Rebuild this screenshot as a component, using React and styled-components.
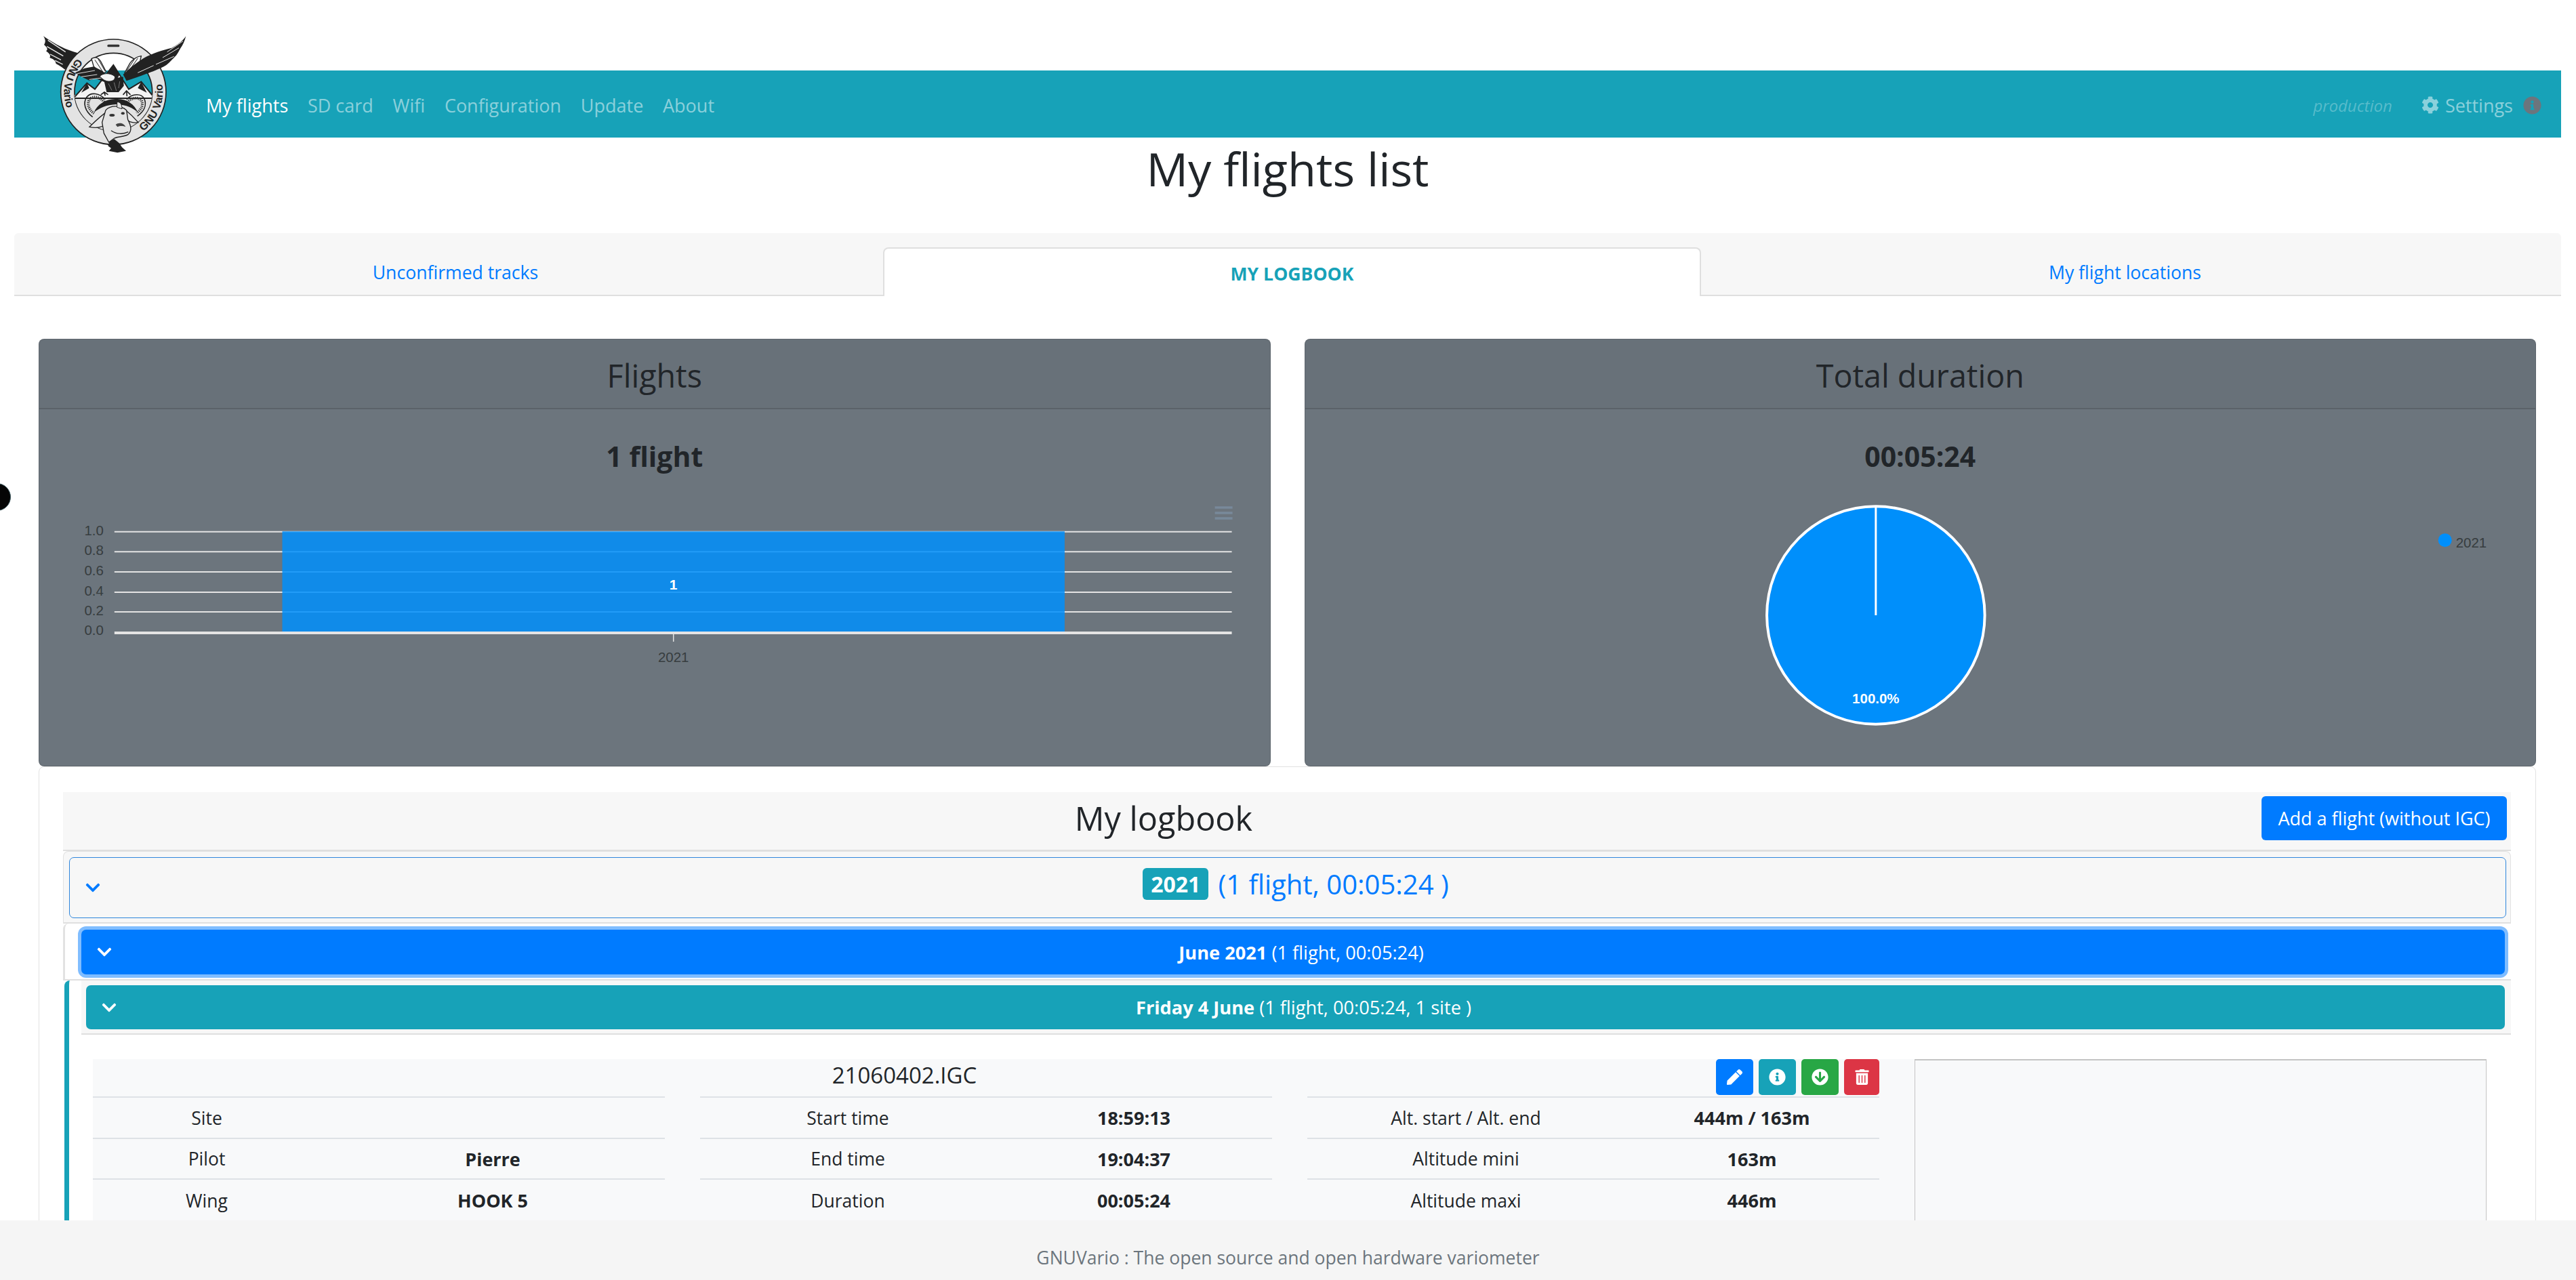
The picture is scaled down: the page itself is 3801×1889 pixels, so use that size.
import React from 'react';
import styled, { createGlobalStyle } from 'styled-components';
import { FaCog, FaInfoCircle, FaChevronDown, FaPen, FaArrowCircleDown, FaTrashAlt } from 'react-icons/fa';

const GlobalStyle = createGlobalStyle`
  html, body {
    margin: 0;
    padding: 0;
    background: #fff;
    color: #212529;
    font-family: "Open Sans", "Noto Sans", "Liberation Sans", sans-serif;
    font-size: 27px;
  }
  * { box-sizing: border-box; }
`;

const Page = styled.div`
  height: 1889px;
  overflow: hidden;
  padding: 104px 22px 0 21px;
`;

const NavBar = styled.nav`
  position: relative;
  display: flex;
  align-items: center;
  height: 99px;
  padding: 3px 29px 0 283px;
  background: #17a2b8;
`;

const LogoBox = styled.div`
  position: absolute;
  left: 19px;
  top: -74px;
  width: 260px;
  height: 210px;
`;

const NavLinks = styled.div`
  display: flex;
  flex: 1;
  gap: 28.7px;
`;

const NavLink = styled.a`
  color: ${(p) => (p.$active ? '#fff' : 'rgba(255,255,255,.5)')};
`;

const NavRight = styled.div`
  display: flex;
  align-items: center;
`;

const EnvLabel = styled.em`
  margin-right: 43px;
  color: rgba(255,255,255,.28);
  font-size: 24px;
`;

const SettingsLink = styled.a`
  display: flex;
  align-items: center;
  gap: 9px;
  margin-right: 15px;
  color: rgba(255,255,255,.5);
`;

const InfoDot = styled.span`
  display: flex;
  color: #6c757d;
`;

const PageTitle = styled.h1`
  margin: 0 0 47px;
  padding-bottom: 3px;
  font-size: 68.5px;
  font-weight: 400;
  line-height: 91px;
  text-align: center;
`;

const Tabs = styled.div`
  display: grid;
  grid-template-columns: 1282px 1207px 1fr;
  align-items: end;
  height: 93px;
  border-bottom: 2px solid #dfdfdf;
  border-radius: 6px 6px 0 0;
  background: #f7f7f7;
  font-size: 26.6px;
`;

const Tab = styled.a`
  display: flex;
  align-items: center;
  justify-content: center;
  height: 72px;
  margin-bottom: ${(p) => (p.$active ? '-2px' : '0')};
  padding: ${(p) => p.$pad || '0'};
  padding-top: ${(p) => (p.$active ? '3px' : '6px')};
  border: ${(p) => (p.$active ? '2px solid #dfdfdf' : 'none')};
  border-bottom: none;
  border-radius: 8px 8px 0 0;
  background: ${(p) => (p.$active ? '#fff' : 'transparent')};
  color: ${(p) => (p.$active ? '#17a2b8' : '#007bff')};
  font-weight: ${(p) => (p.$active ? 700 : 400)};
  text-transform: ${(p) => (p.$active ? 'uppercase' : 'none')};
`;

const Content = styled.div`
  padding: 63px 37px 0 36px;
`;

const CardRow = styled.div`
  display: grid;
  grid-template-columns: 1fr 1fr;
  gap: 50px;
`;

const StatCard = styled.section`
  height: 631px;
  overflow: hidden;
  border: 1px solid rgba(0,0,0,.125);
  border-radius: 8px;
  background: #6c757d;
`;

const StatHeader = styled.h3`
  height: 103px;
  margin: 0;
  border-bottom: 2px solid rgba(0,0,0,.125);
  background: rgba(0,0,0,.03);
  font-size: 46.6px;
  font-weight: 400;
  line-height: 106px;
  text-align: center;
`;

const StatValue = styled.h4`
  height: 117px;
  margin: 0;
  font-size: 41px;
  font-weight: 700;
  line-height: 138px;
  text-align: center;
`;

const ChartSvg = styled.svg`
  display: block;
  width: 100%;
  height: 408px;
`;

const LogCard = styled.section`
  padding: 37px 36px 0 35px;
  border: 1px solid #e2e2e2;
  border-radius: 8px;
`;

const LogHeader = styled.header`
  display: flex;
  align-items: center;
  height: 87px;
  padding-right: 6px;
  border-bottom: 2px solid #dfdfdf;
  background: #f7f7f7;
`;

const LogTitle = styled.h3`
  flex: 1;
  margin: 0 0 9px 4px;
  font-size: 48.6px;
  font-weight: 400;
  text-align: center;
`;

const AddButton = styled.button`
  width: 362px;
  height: 65px;
  margin-bottom: 8px;
  padding: 0;
  border: none;
  border-radius: 6px;
  background: #007bff;
  color: #fff;
  font: inherit;
`;

const YearRow = styled.div`
  padding: 8px 6px 6px 8px;
  border: 1px solid #e2e2e2;
  border-bottom: 2px solid #dfdfdf;
  border-radius: 8px 8px 0 0;
  background: #f7f7f7;
`;

const Toggle = styled.div`
  display: flex;
  align-items: center;
  height: ${(p) => p.$height};
  padding: 0 22px;
  border-radius: 7px;
  border: ${(p) => (p.$variant === 'outline' ? '1.5px solid #2f86dc' : 'none')};
  background: ${(p) => ({ outline: 'transparent', primary: '#007bff', info: '#17a2b8' }[p.$variant])};
  box-shadow: ${(p) => (p.$variant === 'primary' ? '0 0 0 5px #80bdff' : 'none')};
  color: ${(p) => (p.$variant === 'outline' ? '#007bff' : '#fff')};
`;

const ToggleText = styled.div`
  flex: 1;
  padding-bottom: ${(p) => p.$lift || '0'};
  text-align: center;
  font-size: ${(p) => p.$size || '27.2px'};
`;

const YearBadge = styled.span`
  display: inline-block;
  margin-right: 14px;
  padding: 0 12px;
  border-radius: 6px;
  background: #17a2b8;
  color: #fff;
  font-size: 32px;
  font-weight: 700;
  line-height: 47px;
  vertical-align: 3px;
`;

const MonthRow = styled.div`
  padding: 9px 9px 7px 24px;
  border-left: 3px solid #e2e2e2;
  border-bottom: 2px solid #dfdfdf;
  border-radius: 8px 0 0 0;
`;

const DayBlock = styled.div`
  margin-left: 2px;
  border-left: 7px solid #17a2b8;
  border-radius: 8px 0 0 0;
`;

const DayHeader = styled.div`
  margin-left: 18px;
  padding: 7px 9px 6px 7px;
  border-bottom: 2px solid #dfdfdf;
  background: #f7f7f7;
`;

const DayBody = styled.div`
  display: grid;
  grid-template-columns: repeat(4, 1fr);
  grid-template-rows: 55px 1fr;
  column-gap: 52px;
  margin: 36px 36px 0 35px;
  background: #f8f9fa;
`;

const FlightHead = styled.div`
  grid-column: 1 / 4;
  display: flex;
  align-items: flex-start;
`;

const FlightName = styled.div`
  flex: 1;
  font-size: 33px;
  line-height: 47px;
  text-align: center;
`;

const ActionButtons = styled.div`
  display: flex;
  gap: 8px;
`;

const InfoColumn = styled.div`
  border-top: 2px solid #dee2e6;
  font-size: 26.5px;
`;

const InfoRow = styled.div`
  display: grid;
  grid-template-columns: ${(p) => p.$labelWidth}px 1fr;
  align-items: center;
  height: 60.5px;
  padding-top: 1px;
  border-bottom: 2px solid #dee2e6;
  text-align: center;

  &:last-child {
    border-bottom: none;
  }
`;

const InfoValue = styled.b`
  font-size: 27px;
  font-weight: 700;
`;

const IconButton = styled.button`
  display: flex;
  align-items: center;
  justify-content: center;
  width: ${(p) => p.$width || '55px'};
  height: 53px;
  padding: 0;
  border: none;
  border-radius: 5px;
  background: ${(p) => p.$color};
  color: #fff;
`;

const MapBox = styled.div`
  grid-column: 4;
  grid-row: 1 / span 2;
  height: 400px;
  border: 1px solid #c4c4c4;
  border-top-width: 2px;
`;

const Footer = styled.footer`
  position: fixed;
  left: 0;
  right: 0;
  bottom: 0;
  height: 88px;
  background: #f5f5f5;
  color: #6c757d;
  font-size: 26.5px;
  line-height: 110px;
  text-align: center;
`;

const EdgeDot = styled.div`
  position: fixed;
  left: -25px;
  top: 713px;
  width: 41px;
  height: 41px;
  border: 1px solid #3d5a60;
  border-radius: 50%;
  background: #050505;
`;

const axisText = { fontFamily: '"Liberation Sans", Arial, sans-serif', fontSize: 20.5, fill: '#373d3f' };

const BarChart = () => {
  const ticks = [['1.0', 63.5], ['0.8', 93], ['0.6', 123], ['0.4', 153], ['0.2', 182]];
  return (
    <ChartSvg viewBox="0 0 1818 408">
      <g fill="#78899a">
        <rect x="1737" y="26" width="26" height="3.5" />
        <rect x="1737" y="34" width="26" height="3.5" />
        <rect x="1737" y="42" width="26" height="3.5" />
      </g>
      {ticks.map(([label, y]) => (
        <g key={label}>
          <line x1="111" x2="1762" y1={y} y2={y} stroke="#e4e4e4" strokeWidth="2" />
          <text x="95" y={y + 5} textAnchor="end" style={axisText}>{label}</text>
        </g>
      ))}
      <text x="95" y="216" textAnchor="end" style={axisText}>0.0</text>
      <rect x="359" y="63" width="1156" height="150" fill="#008ffb" fillOpacity=".85" />
      <line x1="111" x2="1762" y1="213" y2="213" stroke="#e4e4e4" strokeWidth="4" />
      <line x1="937" x2="937" y1="214" y2="226" stroke="#e4e4e4" strokeWidth="1.5" />
      <text x="937" y="256" textAnchor="middle" style={axisText}>2021</text>
      <text x="937" y="149" textAnchor="middle" fill="#fff" fontWeight="700" fontSize="21" fontFamily='"Liberation Sans", Arial, sans-serif'>1</text>
    </ChartSvg>
  );
};

const PieChart = () => (
  <ChartSvg viewBox="0 0 1818 408">
    <circle cx="843" cy="187" r="161" fill="#008ffb" stroke="#fff" strokeWidth="4" />
    <line x1="843" x2="843" y1="26" y2="187" stroke="#fff" strokeWidth="3" />
    <text x="843" y="317" textAnchor="middle" fill="#fff" fontWeight="700" fontSize="20.5" fontFamily='"Liberation Sans", Arial, sans-serif'>100.0%</text>
    <circle cx="1684" cy="76" r="10" fill="#008ffb" />
    <text x="1700" y="87" style={axisText}>2021</text>
  </ChartSvg>
);

const Logo = () => (
  <svg viewBox="0 0 780 630" width="260" height="210">
    <defs>
      <clipPath id="hole"><circle cx="382" cy="317" r="172" /></clipPath>
      <path id="arcLeft" d="M232 158 A218 218 0 0 0 250 490" />
      <path id="arcRight" d="M505 497 A218 218 0 0 0 590 250" />
    </defs>
    {/* outer left wing, under the ring */}
    <path d="M225 145 C170 130 130 110 72 70 C85 90 80 100 75 108 C92 122 92 130 84 136 C104 150 104 158 100 166 C124 174 126 184 128 192 C145 200 158 212 168 218 Z" fill="#222" />
    <path d="M92 88 L170 140 M88 116 L160 158 M102 150 L150 175 M124 178 L158 195" stroke="#eee" strokeWidth="4" fill="none" />
    {/* ring */}
    <path d="M382 84 A233 233 0 1 0 382 550 A233 233 0 1 0 382 84 Z M382 145 A172 172 0 1 1 382 489 A172 172 0 1 1 382 145 Z" fillRule="evenodd" fill="#e3e3e3" stroke="#222" strokeWidth="5" />
    <rect x="355" y="107" width="54" height="11" rx="5" fill="#333" />
    <text fontFamily='"Liberation Sans", Arial, sans-serif' fontWeight="700" fontSize="48" fill="#222">
      <textPath href="#arcLeft" startOffset="14">GNU Vario</textPath>
    </text>
    <text fontFamily='"Liberation Sans", Arial, sans-serif' fontWeight="700" fontSize="48" fill="#222">
      <textPath href="#arcRight" startOffset="10">GNU Vario</textPath>
    </text>
    {/* mountains and inner fill */}
    <g clipPath="url(#hole)">
      <rect x="200" y="330" width="370" height="170" fill="#e3e3e3" />
      <path d="M205 345 L265 278 L300 305 L382 198 L450 305 L505 272 L565 345 Z" fill="#f2f2f2" stroke="#222" strokeWidth="6" />
      <path d="M382 198 L345 250 L365 240 L395 265 L410 240 Z M265 278 L240 320 L275 300 Z M505 272 L530 320 L490 300 Z" fill="#222" />
    </g>
    {/* left wing on top */}
    <path d="M285 170 C300 160 315 165 325 180 L350 228 L330 238 L295 205 Z" fill="#f5f5f5" stroke="#222" strokeWidth="4" />
    <path d="M300 175 L335 228 M315 172 L345 225" stroke="#222" strokeWidth="3" />
    <path d="M212 232 L255 212 L295 205 L335 225 L355 245 L348 275 L305 258 L275 266 L240 250 Z" fill="#222" />
    <path d="M222 236 L300 222 M240 250 L310 240 M275 262 L330 255" stroke="#ddd" strokeWidth="3" />
    {/* right wing, over the ring */}
    <path d="M505 158 C490 160 470 170 455 190 L432 232 L455 240 L495 205 Z" fill="#f5f5f5" stroke="#222" strokeWidth="4" />
    <path d="M490 168 L448 228 M475 172 L440 225" stroke="#222" strokeWidth="3" />
    <path d="M703 70 C690 90 668 108 640 122 C600 132 555 145 515 168 C480 190 450 215 425 240 L440 268 C470 258 500 248 525 238 C555 228 585 215 605 205 C625 195 640 175 660 155 C668 145 672 135 678 125 C690 110 698 90 703 70 Z" fill="#222" />
    <path d="M690 92 L620 140 M672 122 L600 165 M650 160 L570 195 M560 200 L490 232" stroke="#e8e8e8" strokeWidth="3" fill="none" />
    {/* eagle body */}
    <path d="M340 265 L425 250 L428 290 L405 318 L352 318 Z" fill="#222" />
    <path d="M360 280 L375 310 M385 275 L395 312 M410 270 L405 300" stroke="#888" strokeWidth="2.5" />
    <path d="M322 248 C335 232 370 232 388 248 C392 262 378 272 358 270 C345 268 335 262 322 248 Z" fill="#f4f4f4" stroke="#222" strokeWidth="3" />
    <path d="M342 318 L328 328 M342 318 L345 332 M342 318 L357 328 M440 312 L426 328 M440 312 L442 334 M440 312 L456 328" stroke="#222" strokeWidth="5" strokeLinecap="round" />
    {/* horns: thin hatched loops and a solid arch between them */}
    <path d="M345 350 C322 322 282 316 264 340 C246 366 256 402 290 428" fill="none" stroke="#222" strokeWidth="5" />
    <path d="M440 350 C468 322 506 324 518 346 C532 376 516 404 488 424" fill="none" stroke="#222" strokeWidth="5" />
    <path d="M342 362 C322 338 290 332 276 350 C264 370 272 394 296 412" fill="none" stroke="#333" strokeWidth="12" strokeDasharray="4 4" />
    <path d="M442 362 C466 340 494 340 506 354 C516 376 506 396 484 410" fill="none" stroke="#333" strokeWidth="12" strokeDasharray="4 4" />
    <path d="M296 408 C310 372 350 346 395 348 C440 346 476 372 490 408 C470 388 440 374 395 372 C350 374 320 388 296 408 Z" fill="#222" />
    {/* ears and face */}
    <path d="M362 398 C330 420 300 448 276 472 C310 480 336 472 352 456 Z" fill="#e8e8e8" stroke="#222" strokeWidth="4" />
    <path d="M430 392 C455 412 475 432 492 452 C468 456 448 448 436 436 Z" fill="#e8e8e8" stroke="#222" strokeWidth="4" />
    <path d="M348 398 C368 375 415 375 440 398 L446 440 C462 470 464 490 446 506 C430 516 402 514 386 522 L362 540 L340 500 L332 452 Z" fill="#e3e3e3" stroke="#222" strokeWidth="4" />
    <path d="M398 362 C412 360 420 372 420 392 L398 385 Z" fill="#e3e3e3" stroke="#222" strokeWidth="3" />
    <ellipse cx="376" cy="420" rx="12" ry="6" fill="#333" />
    <ellipse cx="424" cy="412" rx="8" ry="6" fill="#333" />
    <path d="M392 462 C405 450 430 455 436 472 C428 468 410 466 400 472 Z" fill="#444" />
    <path d="M372 488 C395 505 425 505 448 494" stroke="#222" strokeWidth="4" fill="none" />
    {/* beard */}
    <path d="M366 535 L358 556 L372 566 L362 578 L400 586 L438 578 L420 562 L408 544 L386 526 Z" fill="#222" />
  </svg>
);

const COLUMNS = [
  { labelWidth: 336, rows: [['Site', ''], ['Pilot', 'Pierre'], ['Wing', 'HOOK 5']] },
  { labelWidth: 436, rows: [['Start time', '18:59:13'], ['End time', '19:04:37'], ['Duration', '00:05:24']] },
  { labelWidth: 468, rows: [['Alt. start / Alt. end', '444m / 163m'], ['Altitude mini', '163m'], ['Altitude maxi', '446m']] },
];

const App = () => (
  <Page>
    <GlobalStyle />
    <NavBar>
      <LogoBox><Logo /></LogoBox>
      <NavLinks>
        <NavLink $active>My flights</NavLink>
        <NavLink>SD card</NavLink>
        <NavLink>Wifi</NavLink>
        <NavLink>Configuration</NavLink>
        <NavLink>Update</NavLink>
        <NavLink>About</NavLink>
      </NavLinks>
      <NavRight>
        <EnvLabel>production</EnvLabel>
        <SettingsLink><FaCog size={26} />Settings</SettingsLink>
        <InfoDot><FaInfoCircle size={27} /></InfoDot>
      </NavRight>
    </NavBar>

    <PageTitle>My flights list</PageTitle>

    <Tabs>
      <Tab $pad="0 0 0 20px">Unconfirmed tracks</Tab>
      <Tab $active>My logbook</Tab>
      <Tab $pad="0 18px 0 0">My flight locations</Tab>
    </Tabs>

    <Content>
      <CardRow>
        <StatCard>
          <StatHeader>Flights</StatHeader>
          <StatValue>1 flight</StatValue>
          <BarChart />
        </StatCard>
        <StatCard>
          <StatHeader>Total duration</StatHeader>
          <StatValue>00:05:24</StatValue>
          <PieChart />
        </StatCard>
      </CardRow>

      <LogCard>
        <LogHeader>
          <LogTitle>My logbook</LogTitle>
          <AddButton>Add a flight (without IGC)</AddButton>
        </LogHeader>
        <YearRow>
          <Toggle $variant="outline" $height="90px">
            <FaChevronDown size={24} />
            <ToggleText $size="40px" $lift="12px"><YearBadge>2021</YearBadge>(1 flight, 00:05:24 )</ToggleText>
          </Toggle>
        </YearRow>
        <MonthRow>
          <Toggle $variant="primary" $height="66px">
            <FaChevronDown size={24} />
            <ToggleText><b>June 2021</b> (1 flight, 00:05:24)</ToggleText>
          </Toggle>
        </MonthRow>
        <DayBlock>
          <DayHeader>
            <Toggle $variant="info" $height="65px">
              <FaChevronDown size={24} />
              <ToggleText><b>Friday 4 June</b> (1 flight, 00:05:24, 1 site )</ToggleText>
            </Toggle>
          </DayHeader>
          <DayBody>
            <FlightHead>
              <FlightName>21060402.IGC</FlightName>
              <ActionButtons>
                <IconButton $color="#007bff"><FaPen size={23} /></IconButton>
                <IconButton $color="#17a2b8"><FaInfoCircle size={25} /></IconButton>
                <IconButton $color="#28a745"><FaArrowCircleDown size={25} /></IconButton>
                <IconButton $color="#dc3545" $width="52px"><FaTrashAlt size={23} /></IconButton>
              </ActionButtons>
            </FlightHead>
            <MapBox />
            {COLUMNS.map((col) => (
              <InfoColumn key={col.labelWidth}>
                {col.rows.map(([label, value]) => (
                  <InfoRow key={label} $labelWidth={col.labelWidth}>
                    <span>{label}</span>
                    <InfoValue>{value}</InfoValue>
                  </InfoRow>
                ))}
              </InfoColumn>
            ))}
          </DayBody>
        </DayBlock>
      </LogCard>
    </Content>

    <Footer>GNUVario : The open source and open hardware variometer</Footer>
    <EdgeDot />
  </Page>
);

export default App;
